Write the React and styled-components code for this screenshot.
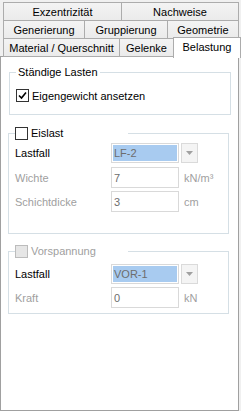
import styled, { createGlobalStyle } from "styled-components"

const GlobalStyle = createGlobalStyle`
  body {
    margin: 0;
    background: #f0f0f0;
    font-family: "Liberation Sans", Arial, sans-serif;
    font-size: 11px;
    color: #000;
  }
`;

const Frame = styled.div`
  width: 241px;
  height: 411px;
  display: flex;
  flex-direction: column;
`;

const TabStrip = styled.div`
  padding: 2px 0 0 3px;
  display: flex;
  flex-direction: column;
`;

const TabRow = styled.div`
  display: flex;
  align-items: flex-end;
  height: 19px;
  margin-top: ${p => (p.$first ? "0" : "-1px")};
`;

const Tab = styled.div`
  box-sizing: border-box;
  width: ${p => p.$w}px;
  height: ${p => (p.$active ? "21px" : "19px")};
  margin-left: ${p => (p.$first ? "0" : "-1px")};
  border: 1px solid #acacac;
  border-bottom: ${p => (p.$active ? "none" : "1px solid #acacac")};
  background: ${p => (p.$active ? "#fff" : "linear-gradient(#f3f3f3, #ebebeb)")};
  display: flex;
  align-items: center;
  justify-content: center;
  padding-bottom: ${p => (p.$active ? "2px" : "0")};
  position: relative;
  z-index: ${p => (p.$active ? 2 : 1)};
  margin-bottom: ${p => (p.$active ? "-1px" : "0")};
  white-space: nowrap;
`;

const Panel = styled.div`
  box-sizing: border-box;
  width: 239px;
  height: 355px;
  margin-top: -1px;
  background: #fff;
  border: 1px solid #a0a0a0;
  display: flex;
  flex-direction: column;
  align-items: flex-start;
`;

const Group = styled.fieldset`
  box-sizing: border-box;
  width: ${p => p.$w}px;
  margin: ${p => p.$mt}px 0 0 ${p => p.$ml}px;
  padding: ${p => p.$pt}px 6px ${p => p.$pb}px 6px;
  border: 1px solid #d5dfe5;
  min-width: 0;
  display: flex;
  flex-direction: column;
  gap: 3px;
`;

const Legend = styled.legend`
  padding: 0 ${p => (p.$check ? "0" : "2px")};
  width: ${p => (p.$check ? "113px" : "auto")};
  height: 13px;
  line-height: 13px;
  display: flex;
  align-items: center;
  color: ${p => (p.$disabled ? "#a0a0a0" : "#000")};
  white-space: nowrap;
`;

const CheckLine = styled.label`
  display: flex;
  align-items: center;
  gap: 3px;
  height: 13px;
  color: ${p => (p.$disabled ? "#a0a0a0" : "#000")};
`;

const Box = styled.span`
  box-sizing: border-box;
  width: 13px;
  height: 13px;
  border: 1px solid ${p => (p.$disabled ? "#bcbcbc" : "#333")};
  background: ${p => (p.$disabled ? "#e6e6e6" : "#fff")};
  display: flex;
  align-items: center;
  justify-content: center;
  flex-shrink: 0;
`;

const Row = styled.div`
  display: flex;
  align-items: center;
  height: ${p => p.$h}px;
  margin-top: ${p => p.$mt || 0}px;
`;

const Label = styled.span`
  width: 96px;
  color: ${p => (p.$disabled ? "#a0a0a0" : "#000")};
`;

const Combo = styled.div`
  box-sizing: border-box;
  width: 68px;
  height: 20px;
  border: 1px solid #d9d9d9;
  padding: 1px;
  background: #fff;
  display: flex;
`;

const Selected = styled.div`
  flex: 1;
  background: #a8cbf0;
  color: #6d6d6d;
  display: flex;
  align-items: center;
  padding-left: 1px;
`;

const DropButton = styled.div`
  box-sizing: border-box;
  width: 17px;
  height: 20px;
  margin-left: 2px;
  border: 1px solid #dadada;
  background: #f4f4f4;
  display: flex;
  align-items: center;
  justify-content: center;
`;

const TextBox = styled.div`
  box-sizing: border-box;
  width: 68px;
  height: 21px;
  border: 1px solid #d9d9d9;
  background: #fff;
  color: #6d6d6d;
  padding-left: 2px;
  display: flex;
  align-items: center;
`;

const Unit = styled.span`
  margin-left: 5px;
  color: #a0a0a0;
`;

const CheckMark = () => (
  <svg width="9" height="9" viewBox="0 0 9 9">
    <path d="M1 4.5 L3.5 7 L8 1.5" fill="none" stroke="#000" strokeWidth="1.6" />
  </svg>
);

const Arrow = () => (
  <svg width="7" height="4" viewBox="0 0 7 4">
    <path d="M0 0 H7 L3.5 4 Z" fill="#a0a0a0" />
  </svg>
);

const tabRows = [
  [["Exzentrizität", 119], ["Nachweise", 118]],
  [["Generierung", 82], ["Gruppierung", 84], ["Geometrie", 72]],
  [["Material / Querschnitt", 117], ["Gelenke", 55], ["Belastung", 68, true]],
];

const ComboRow = ({ value, mt }) => (
  <Row $h={20} $mt={mt}>
    <Label>Lastfall</Label>
    <Combo>
      <Selected>{value}</Selected>
    </Combo>
    <DropButton>
      <Arrow />
    </DropButton>
  </Row>
);

const FieldRow = ({ label, value, unit, mt }) => (
  <Row $h={21} $mt={mt}>
    <Label $disabled>{label}</Label>
    <TextBox>{value}</TextBox>
    <Unit>{unit}</Unit>
  </Row>
);

export default function App() {
  return (
    <Frame>
      <GlobalStyle />
      <TabStrip>
        {tabRows.map((row, i) => (
          <TabRow key={i} $first={i === 0}>
            {row.map(([name, w, active], j) => (
              <Tab key={name} $w={w} $first={j === 0} $active={active}>
                {name}
              </Tab>
            ))}
          </TabRow>
        ))}
      </TabStrip>
      <Panel>
        <Group $w={222} $mt={9} $ml={8} $pt={10} $pb={12}>
          <Legend>Ständige Lasten</Legend>
          <CheckLine>
            <Box><CheckMark /></Box>
            Eigengewicht ansetzen
          </CheckLine>
        </Group>

        <Group $w={221} $mt={12} $ml={7} $pt={3} $pb={21}>
          <Legend $check>
            <CheckLine>
              <Box />
              Eislast
            </CheckLine>
          </Legend>
          <ComboRow value="LF-2" />
          <FieldRow label="Wichte" value="7" unit="kN/m³" mt={1} />
          <FieldRow label="Schichtdicke" value="3" unit="cm" />
        </Group>

        <Group $w={221} $mt={11} $ml={7} $pt={6} $pb={5}>
          <Legend $check $disabled>
            <CheckLine $disabled>
              <Box $disabled />
              Vorspannung
            </CheckLine>
          </Legend>
          <ComboRow value="VOR-1" />
          <FieldRow label="Kraft" value="0" unit="kN" />
        </Group>
      </Panel>
    </Frame>
  );
}
